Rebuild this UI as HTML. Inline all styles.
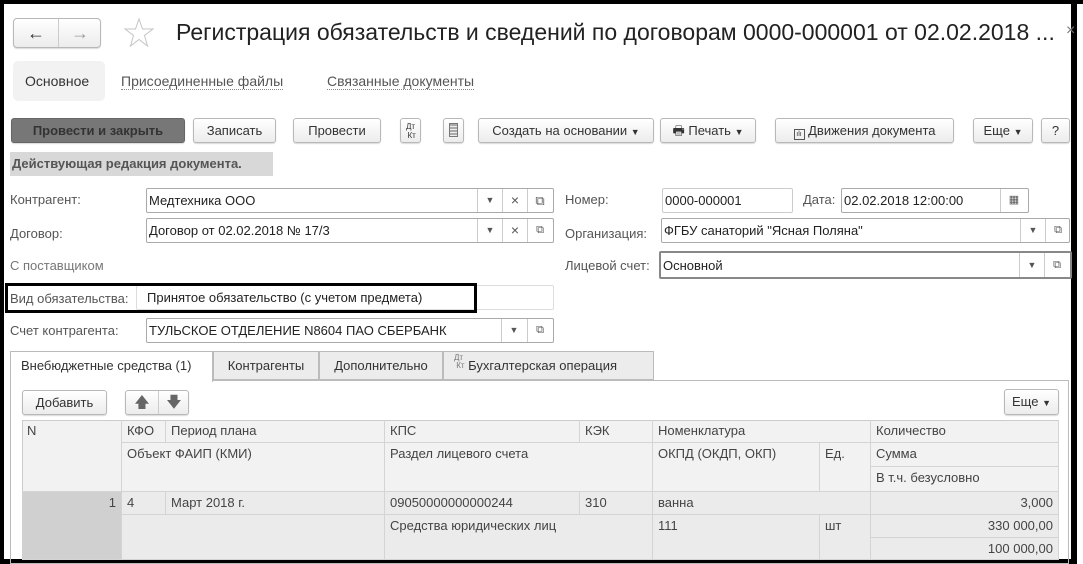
<!DOCTYPE html>
<html><head><meta charset="utf-8"><style>
*{box-sizing:border-box;margin:0;padding:0}
body{width:1083px;height:564px;background:#fff;font-family:"Liberation Sans",Arial,sans-serif;font-size:13px;color:#333;position:relative;overflow:hidden}
.a{position:absolute;white-space:nowrap}
.btn{position:absolute;border:1px solid #b8b8b8;border-radius:3px;background:linear-gradient(#fff,#ececec);height:25px;line-height:23px;text-align:center;font-size:13px;color:#333;box-shadow:0 1px 1px rgba(0,0,0,.15)}
.inp{position:absolute;border:1px solid #aaa;border-radius:2px;height:25px;line-height:23px;padding-left:2px;background:#fff;color:#222}
.sep{position:absolute;top:0;bottom:0;border-left:1px solid #ccc}
.ic{position:absolute;top:0;width:24px;text-align:center;color:#555;font-size:11px}
.lbl{position:absolute;color:#555;white-space:nowrap}
.cell{position:absolute;border-right:1px solid #d4d4d4;border-bottom:1px solid #d4d4d4;padding:3px 5px;color:#444;white-space:nowrap}
</style></head><body>
<div class="a" style="left:0;top:0;width:1083px;height:564px;border:4px solid #000;border-right:none;border-bottom:none"></div>
<div class="a" style="left:1071px;top:0;width:6px;height:564px;background:#000"></div>
<div class="a" style="left:0;top:559px;width:1077px;height:5px;background:#000"></div>

<!-- nav -->
<div class="btn" style="left:13px;top:18px;width:88px;height:30px;line-height:28px;border-radius:4px;">
<span style="position:absolute;left:0;width:44px;font-size:18px;color:#333">&#8592;</span>
<span style="position:absolute;left:44px;top:0;bottom:0;border-left:1px solid #ccc"></span>
<span style="position:absolute;left:44px;width:44px;font-size:18px;color:#999">&#8594;</span></div>
<svg class="a" style="left:123px;top:17px" width="32" height="32" viewBox="0 0 32 32"><polygon points="16,2 19.5,12 30,12 21.5,18.5 24.5,29 16,22.5 7.5,29 10.5,18.5 2,12 12.5,12" fill="none" stroke="#c4c4c4" stroke-width="1"/></svg>
<div class="a" style="left:176px;top:19px;font-size:23px;color:#222">Регистрация обязательств и сведений по договорам 0000-000001 от 02.02.2018 ...</div>
<div class="a" style="left:1066px;top:22px;color:#777;font-size:16px">×</div>

<div class="a" style="left:13px;top:61px;width:92px;height:40px;background:#f2f2f2;border-radius:5px"></div>
<div class="a" style="left:25px;top:73px;font-size:14px;color:#333">Основное</div>
<div class="a" style="left:121px;top:73px;font-size:14px;color:#555;border-bottom:1px dotted #888;line-height:16px">Присоединенные файлы</div>
<div class="a" style="left:327px;top:73px;font-size:14px;color:#555;border-bottom:1px dotted #888;line-height:16px">Связанные документы</div>

<!-- toolbar -->
<div class="btn" style="left:11px;top:118px;width:174px;background:#777;border-color:#666;color:#333;font-weight:bold">Провести и закрыть</div>
<div class="btn" style="left:193px;top:118px;width:83px">Записать</div>
<div class="btn" style="left:293px;top:118px;width:88px">Провести</div>
<div class="btn" style="left:400px;top:118px;width:21px;font-size:8px;line-height:9px;padding-top:3px">Дт<br>&nbsp;Кт</div>
<div class="btn" style="left:443px;top:118px;width:21px"><span style="display:inline-block;width:9px;height:14px;margin-top:4px;border:1px solid #777;background:repeating-linear-gradient(#aaa 0 2px,#eee 2px 3px)"></span></div>
<div class="btn" style="left:478px;top:118px;width:176px">Создать на основании <span style="font-size:9px">▼</span></div>
<div class="btn" style="left:660px;top:118px;width:96px">🖶 Печать <span style="font-size:9px">▼</span></div>
<div class="btn" style="left:775px;top:118px;width:179px"><span style="display:inline-block;width:11px;height:11px;border:1px solid #555;vertical-align:-1px;font-size:7px;line-height:9px">ılı</span> Движения документа</div>
<div class="btn" style="left:973px;top:118px;width:60px">Еще <span style="font-size:9px">▼</span></div>
<div class="btn" style="left:1041px;top:118px;width:29px">?</div>

<div class="a" style="left:10px;top:152px;width:263px;height:24px;background:#d8d8d8;line-height:24px;padding-left:2px;font-weight:bold;color:#555;font-size:13px">Действующая редакция документа.</div>

<!-- fields -->
<div class="lbl" style="left:10px;top:192px">Контрагент:</div>
<div class="inp" style="left:146px;top:188px;width:408px">Медтехника ООО
<span class="sep" style="left:330px"></span><span class="ic" style="left:331px;font-size:9px;line-height:23px">▼</span>
<span class="sep" style="left:355px"></span><span class="ic" style="left:356px;font-size:14px;line-height:23px">×</span>
<span class="sep" style="left:380px"></span><span class="ic" style="left:381px;font-size:13px;line-height:23px">⧉</span></div>
<div class="lbl" style="left:565px;top:192px">Номер:</div>
<div class="inp" style="left:662px;top:188px;width:131px;border-color:#ccc">0000-000001</div>
<div class="lbl" style="left:803px;top:192px">Дата:</div>
<div class="inp" style="left:841px;top:188px;width:188px">02.02.2018 12:00:00<span class="sep" style="left:158px"></span><span class="ic" style="left:160px;line-height:23px">▦</span></div>

<div class="lbl" style="left:10px;top:226px">Договор:</div>
<div class="inp" style="left:146px;top:218px;width:408px">Договор от 02.02.2018 № 17/3
<span class="sep" style="left:330px"></span><span class="ic" style="left:331px;font-size:9px;line-height:23px">▼</span>
<span class="sep" style="left:355px"></span><span class="ic" style="left:356px;font-size:14px;line-height:23px">×</span>
<span class="sep" style="left:380px"></span><span class="ic" style="left:381px;line-height:23px">⧉</span></div>
<div class="lbl" style="left:565px;top:226px">Организация:</div>
<div class="inp" style="left:661px;top:218px;width:409px">ФГБУ санаторий "Ясная Поляна"
<span class="sep" style="left:358px"></span><span class="ic" style="left:359px;font-size:9px;line-height:23px">▼</span>
<span class="sep" style="left:383px"></span><span class="ic" style="left:384px;line-height:23px">⧉</span></div>

<div class="lbl" style="left:10px;top:258px;color:#777">С поставщиком</div>
<div class="lbl" style="left:565px;top:258px">Лицевой счет:</div>
<div class="inp" style="left:659px;top:251px;width:413px;height:28px;line-height:26px;border:2px solid #888">Основной
<span class="sep" style="left:358px"></span><span class="ic" style="left:359px;font-size:9px;line-height:24px">▼</span>
<span class="sep" style="left:383px"></span><span class="ic" style="left:384px;line-height:24px">⧉</span></div>

<div class="inp" style="left:136px;top:285px;width:418px;border-color:#ddd;padding-left:10px;line-height:23px">Принятое обязательство (с учетом предмета)</div>
<div class="a" style="left:5px;top:283px;width:472px;height:30px;border:3px solid #000"></div>
<div class="lbl" style="left:10px;top:291px">Вид обязательства:</div>

<div class="lbl" style="left:10px;top:323px">Счет контрагента:</div>
<div class="inp" style="left:146px;top:318px;width:408px">ТУЛЬСКОЕ ОТДЕЛЕНИЕ N8604 ПАО СБЕРБАНК
<span class="sep" style="left:354px"></span><span class="ic" style="left:355px;font-size:9px;line-height:23px">▼</span>
<span class="sep" style="left:380px"></span><span class="ic" style="left:381px;line-height:23px">⧉</span></div>

<!-- tabs -->
<div class="a" style="left:10px;top:380px;width:1059px;height:184px;border:1px solid #bbb"></div>
<div class="a" style="left:10px;top:351px;width:203px;height:31px;border:1px solid #bbb;border-bottom:none;background:#fff;line-height:28px;padding-left:10px">Внебюджетные средства (1)</div>
<div class="a" style="left:213px;top:351px;width:106px;height:29px;border:1px solid #bbb;background:#ececec;line-height:28px;text-align:center">Контрагенты</div>
<div class="a" style="left:319px;top:351px;width:124px;height:29px;border:1px solid #bbb;background:#ececec;line-height:28px;text-align:center">Дополнительно</div>
<div class="a" style="left:443px;top:351px;width:211px;height:29px;border:1px solid #bbb;background:#ececec;line-height:28px;padding-left:10px"><span style="font-size:8px;color:#777;display:inline-block;line-height:8px;vertical-align:2px">Дт<br>&nbsp;Кт</span> Бухгалтерская операция</div>

<div class="btn" style="left:22px;top:390px;width:85px">Добавить</div>
<div class="btn" style="left:125px;top:390px;width:64px"><span style="position:absolute;left:0;width:32px;font-size:15px;color:#666">🡅</span><span style="position:absolute;left:32px;top:0;bottom:0;border-left:1px solid #ccc"></span><span style="position:absolute;left:32px;width:32px;font-size:15px;color:#666">🡇</span></div>
<div class="btn" style="left:1004px;top:389px;width:55px;height:26px">Еще <span style="font-size:9px">▼</span></div>

<!-- table -->
<div class="a" style="left:22px;top:420px;width:1037px;height:140px;background:#f2f2f2;border:1px solid #ccc"></div>
<div class="cell" style="left:22px;top:420px;width:100px;height:72px">N</div>
<div class="cell" style="left:122px;top:420px;width:44px;height:23px">КФО</div>
<div class="cell" style="left:166px;top:420px;width:219px;height:23px">Период плана</div>
<div class="cell" style="left:122px;top:443px;width:263px;height:49px">Объект ФАИП (КМИ)</div>
<div class="cell" style="left:385px;top:420px;width:195px;height:23px">КПС</div>
<div class="cell" style="left:580px;top:420px;width:73px;height:23px">КЭК</div>
<div class="cell" style="left:385px;top:443px;width:268px;height:49px">Раздел лицевого счета</div>
<div class="cell" style="left:653px;top:420px;width:218px;height:23px">Номенклатура</div>
<div class="cell" style="left:653px;top:443px;width:167px;height:49px">ОКПД (ОКДП, ОКП)</div>
<div class="cell" style="left:820px;top:443px;width:51px;height:49px">Ед.</div>
<div class="cell" style="left:871px;top:420px;width:188px;height:23px">Количество</div>
<div class="cell" style="left:871px;top:443px;width:188px;height:24px">Сумма</div>
<div class="cell" style="left:871px;top:467px;width:188px;height:25px">В т.ч. безусловно</div>

<div class="a" style="left:22px;top:492px;width:1037px;height:68px;background:#ebebeb"></div>
<div class="cell" style="left:22px;top:492px;width:100px;height:68px;background:#d0d0d0;text-align:right">1</div>
<div class="cell" style="left:122px;top:492px;width:44px;height:23px">4</div>
<div class="cell" style="left:166px;top:492px;width:219px;height:23px">Март 2018 г.</div>
<div class="cell" style="left:122px;top:515px;width:263px;height:45px"></div>
<div class="cell" style="left:385px;top:492px;width:195px;height:23px">09050000000000244</div>
<div class="cell" style="left:580px;top:492px;width:73px;height:23px">310</div>
<div class="cell" style="left:385px;top:515px;width:268px;height:45px">Средства юридических лиц</div>
<div class="cell" style="left:653px;top:492px;width:218px;height:23px">ванна</div>
<div class="cell" style="left:653px;top:515px;width:167px;height:45px">111</div>
<div class="cell" style="left:820px;top:515px;width:51px;height:45px">шт</div>
<div class="cell" style="left:871px;top:492px;width:188px;height:23px;text-align:right">3,000</div>
<div class="cell" style="left:871px;top:515px;width:188px;height:23px;text-align:right">330 000,00</div>
<div class="cell" style="left:871px;top:538px;width:188px;height:22px;text-align:right">100 000,00</div>
</body></html>
